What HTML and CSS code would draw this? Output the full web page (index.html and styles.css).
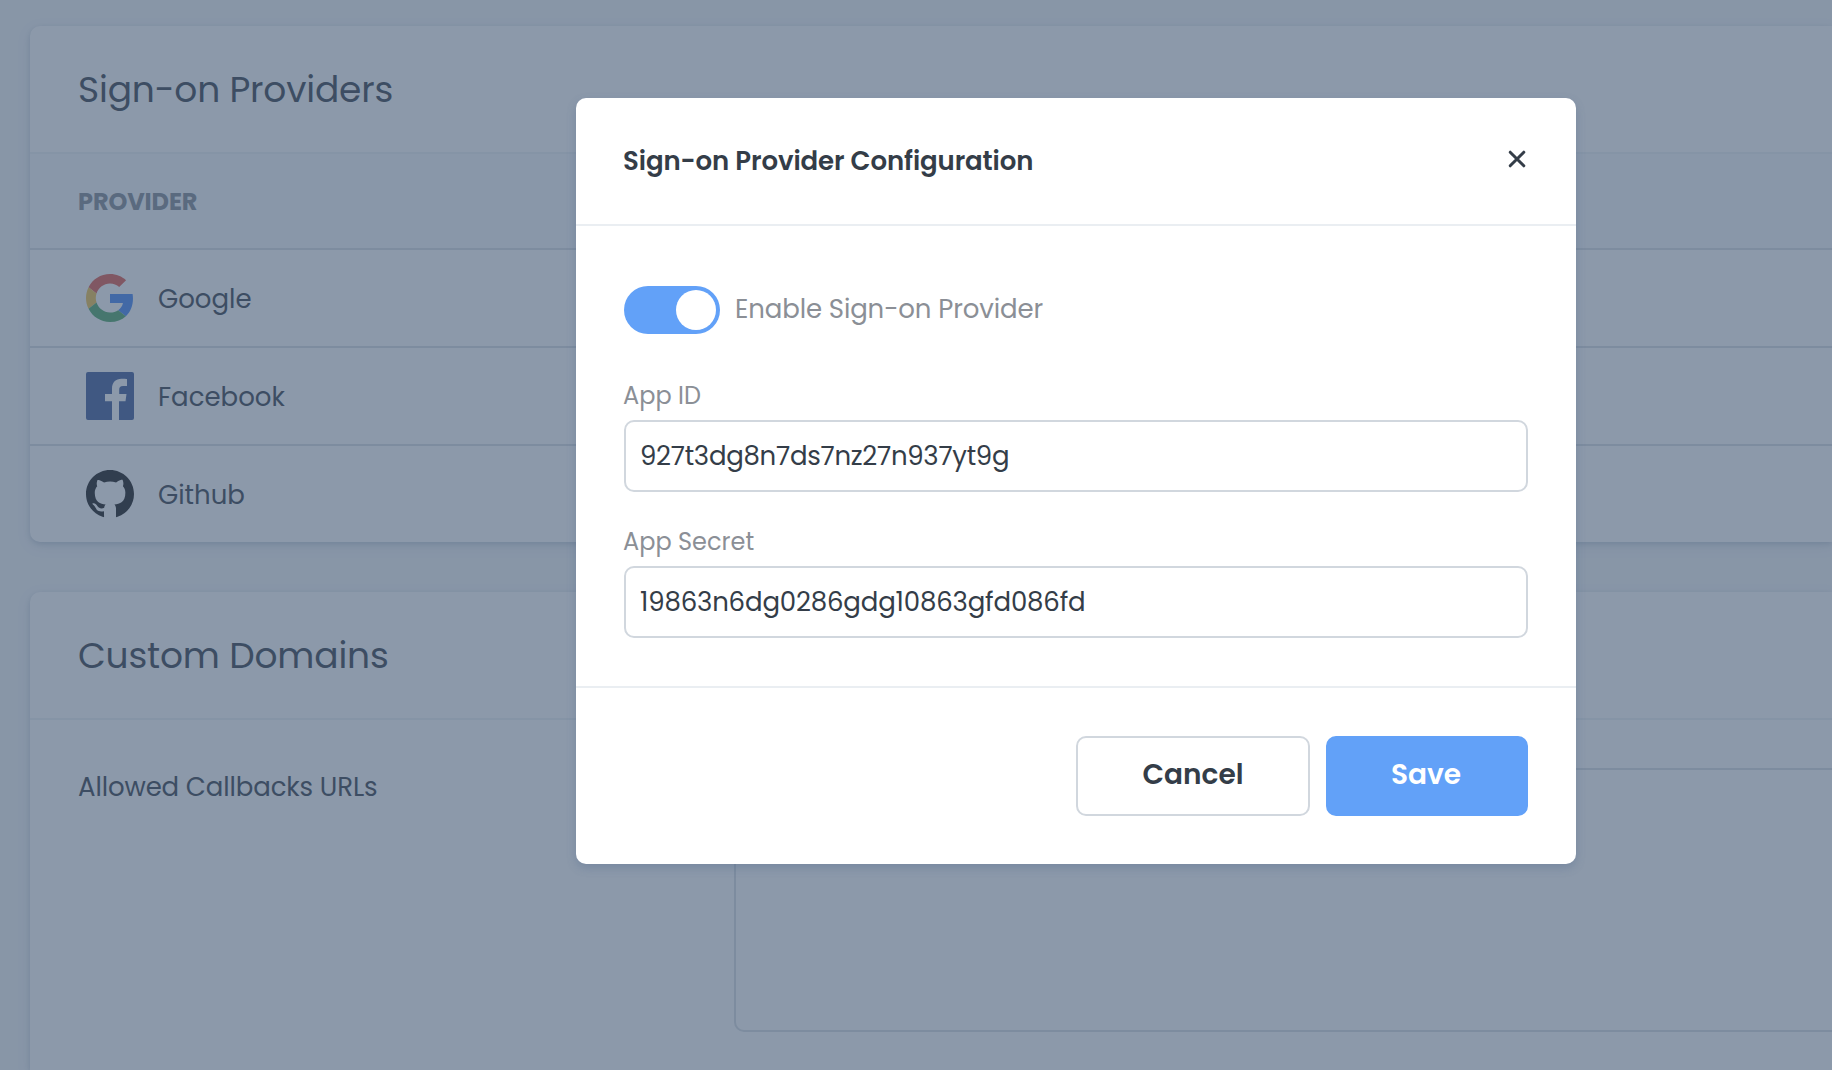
FILE: index.html
```html
<!DOCTYPE html>
<html lang="en">
<head>
<meta charset="utf-8">
<title>Sign-on Providers</title>
<link rel="stylesheet" href="styles.css">
</head>
<body>
<main class="page">
  <section class="card">
    <header class="card-header"><h2 class="card-title">Sign-on Providers</h2></header>
    <div class="table-head">Provider</div>
    <div class="provider">
      <svg class="provider-icon" viewBox="0 0 48 48"><path fill="#E0564A" d="M24 9.5c3.54 0 6.71 1.22 9.21 3.6l6.85-6.85C35.9 2.38 30.47 0 24 0 14.62 0 6.51 5.38 2.56 13.22l7.98 6.19C12.43 13.72 17.74 9.5 24 9.5z"/><path fill="#4285F4" d="M46.98 24.55c0-1.57-.15-3.09-.38-4.55H24v9.02h12.94c-.58 2.96-2.26 5.48-4.78 7.18l7.73 6c4.51-4.18 7.09-10.36 7.09-17.65z"/><path fill="#F0C04A" d="M10.53 28.59c-.48-1.45-.76-2.99-.76-4.59s.27-3.14.76-4.59l-7.98-6.19C.92 16.46 0 20.12 0 24c0 3.88.92 7.54 2.56 10.78l7.97-6.19z"/><path fill="#4CA566" d="M24 48c6.48 0 11.93-2.13 15.89-5.81l-7.73-6c-2.15 1.45-4.92 2.3-8.16 2.3-6.26 0-11.57-4.22-13.47-9.91l-7.98 6.19C6.51 42.62 14.62 48 24 48z"/></svg>
      <span class="provider-name">Google</span>
    </div>
    <div class="provider">
      <svg class="provider-icon" viewBox="0 0 48 48"><path fill="#3b5998" d="M2 0A2 2 0 0 0 0 2v44A2 2 0 0 0 2 48H26V29.3h-7V22h7v-5.4c0-6.200 3.800-9.800 9.400-9.800 2.700 0 5 .2 5.600.3v6.800h-3.900c-3 0-3.900 1.400-3.900 3.500V22h7.300l-1 7.300H33V48h13A2 2 0 0 0 48 46V2A2 2 0 0 0 46 0z"/></svg>
      <span class="provider-name">Facebook</span>
    </div>
    <div class="provider">
      <svg class="provider-icon" viewBox="0 0 16 16"><path fill="#171717" d="M8 0C3.58 0 0 3.58 0 8c0 3.54 2.29 6.53 5.47 7.59l.55.12V15.210c0-.190-.010-.820-.010-1.490-2.010.370-2.530-.490-2.690-.940-.090-.230-.480-.940-.820-1.130-.280-.150-.680-.520-.010-.530.630-.010 1.080.580 1.230.820.720 1.210 1.870.870 2.330.660.070-.520.280-.870.510-1.070-1.780-.200-3.640-.890-3.640-3.950 0-.870.310-1.590.820-2.150-.080-.200-.360-1.020.080-2.120 0 0 .670-.210 2.200.820.640-.180 1.320-.270 2-.270s1.360.090 2 .270c1.530-1.040 2.200-.820 2.200-.820.440 1.100.160 1.920.080 2.120.510.560.820 1.270.820 2.150 0 3.070-1.870 3.750-3.650 3.950.290.250.540.730.540 1.480 0 1.070-.010 1.930-.010 2.200V15.710l.550-.120A8.010 8.010 0 0 0 16 8c0-4.420-3.580-8-8-8z"/></svg>
      <span class="provider-name">Github</span>
    </div>
  </section>
  <section class="card card-fill">
    <header class="card-header"><h2 class="card-title">Custom Domains</h2></header>
    <div class="setting">
      <span class="setting-label">Allowed Callbacks URLs</span>
      <textarea class="setting-input"></textarea>
    </div>
  </section>
</main>
<div class="overlay">
  <form class="modal">
    <header class="modal-header">
      <h3 class="modal-title">Sign-on Provider Configuration</h3>
      <button type="button" class="close" aria-label="Close"><svg class="close-icon" viewBox="0 0 18 18"><path d="M2.200 2.200l13.600 13.600M15.800 2.200L2.200 15.800"/></svg></button>
    </header>
    <div class="modal-body">
      <div class="switch-row"><span class="switch"><span class="knob"></span></span><span class="switch-label">Enable Sign-on Provider</span></div>
      <label class="field"><span class="field-label">App ID</span><input class="field-input app-id" value="927t3dg8n7ds7nz27n937yt9g"></label>
      <label class="field"><span class="field-label">App Secret</span><input class="field-input app-secret" value="19863n6dg0286gdg10863gfd086fd"></label>
    </div>
    <footer class="modal-footer">
      <button type="button" class="button">Cancel</button>
      <button type="button" class="button primary">Save</button>
    </footer>
  </form>
</div>
</body>
</html>
```
FILE: styles.css
```css
* { box-sizing: border-box; }

body {
  margin: 0;
  height: 1070px;
  background: #f4f6f8;
  color: #343d48;
  font-family: Poppins, Inter, "Open Sans", sans-serif;
  font-size: 26px;
}

h2, h3 { margin: 0; }

button, input, textarea { font: inherit; color: inherit; }

.page {
  display: flex;
  flex-direction: column;
  gap: 50px;
  height: 1070px;
  overflow: hidden;
  padding: 26px 0 0 30px;
}

.card {
  flex: none;
  overflow: hidden;
  border-radius: 10px 0 0 10px;
  background: #fff;
  box-shadow: 0 2px 5px rgba(60, 90, 120, .2), 0 4px 14px rgba(72, 98, 130, .12);
}

.card-fill { flex: 1; border-bottom-left-radius: 0; }

.card-header {
  display: flex;
  align-items: center;
  height: 128px;
  padding: 2px 48px 0;
  border-bottom: 2px solid #eef1f4;
}

.card-title { font-size: 36px; font-weight: 400; line-height: 48px; letter-spacing: -.18px; }

.table-head {
  display: flex;
  align-items: center;
  height: 96px;
  padding: 1px 48px 0;
  border-bottom: 2px solid #d8dde2;
  background: #f7f9fb;
  color: #7e8791;
  font-size: 24px;
  font-weight: 700;
  letter-spacing: -.1px;
  text-transform: uppercase;
}

.provider {
  display: flex;
  align-items: center;
  gap: 24px;
  height: 98px;
  padding: 0 56px;
  border-bottom: 2px solid #d8dde2;
}

.provider:last-child { height: 96px; border-bottom: 0; }

.provider-icon { width: 48px; height: 48px; }

.provider-name { padding-top: 2px; }

.setting {
  display: grid;
  grid-template-columns: 656px 1fr;
  padding: 48px 0 38px 48px;
}

.setting-label { line-height: 38px; letter-spacing: -.13px; }

.setting-input {
  height: 264px;
  border: 2px solid #d8dde2;
  border-right: 0;
  border-radius: 10px 0 0 10px;
  background: #fff;
  resize: none;
}

.overlay {
  position: absolute;
  inset: 0;
  height: 1070px;
  padding-top: 98px;
  padding-left: 576px;
  background: rgba(67, 89, 116, .61);
}

.modal {
  width: 1000px;
  height: 766px;
  border-radius: 10px;
  background: #fff;
  box-shadow: 0 4px 10px rgba(72, 98, 140, .3);
}

.modal-header {
  display: flex;
  align-items: center;
  justify-content: space-between;
  height: 128px;
  padding: 0 50px 0 47px;
  border-bottom: 2px solid #eaeef2;
}

.modal-title { font-size: 26px; font-weight: 600; letter-spacing: -.09px; }

.close { display: flex; margin-bottom: 4px; padding: 0; border: 0; background: none; }

.close-icon {
  width: 18px;
  height: 18px;
  fill: none;
  stroke: #343d48;
  stroke-width: 3;
  stroke-linecap: round;
}

.modal-body {
  height: 462px;
  padding: 60px 48px 0;
  border-bottom: 2px solid #eaeef2;
}

.switch-row {
  display: flex;
  align-items: center;
  gap: 15px;
  height: 48px;
  margin-bottom: 44px;
  color: #8b8f96;
  letter-spacing: -.12px;
}

.switch {
  display: flex;
  justify-content: flex-end;
  width: 96px;
  height: 48px;
  padding: 4px;
  border-radius: 24px;
  background: #62a1f8;
}

.knob { width: 40px; height: 40px; border-radius: 50%; background: #fff; }

.switch-label { padding-bottom: 2px; }

.field { display: block; margin-bottom: 32px; }

.field-label {
  display: block;
  height: 42px;
  margin-left: -1px;
  color: #8b8f96;
  font-size: 24px;
  line-height: 36px;
}

.field-input {
  display: block;
  width: 100%;
  height: 72px;
  padding: 0 14px;
  border: 2px solid #d1d7de;
  border-radius: 10px;
  background: #fff;
}

.app-id { letter-spacing: -.28px; }
.app-secret { letter-spacing: -.16px; }

.modal-footer {
  display: flex;
  justify-content: flex-end;
  gap: 16px;
  padding: 48px;
}

.button {
  width: 234px;
  height: 80px;
  padding: 0 0 2px;
  border: 2px solid #d1d7de;
  border-radius: 10px;
  background: #fff;
  font-size: 28px;
  font-weight: 600;
}

.primary {
  width: 202px;
  padding-right: 2px;
  border-color: #62a1f8;
  background: #62a1f8;
  color: #fff;
}
```
